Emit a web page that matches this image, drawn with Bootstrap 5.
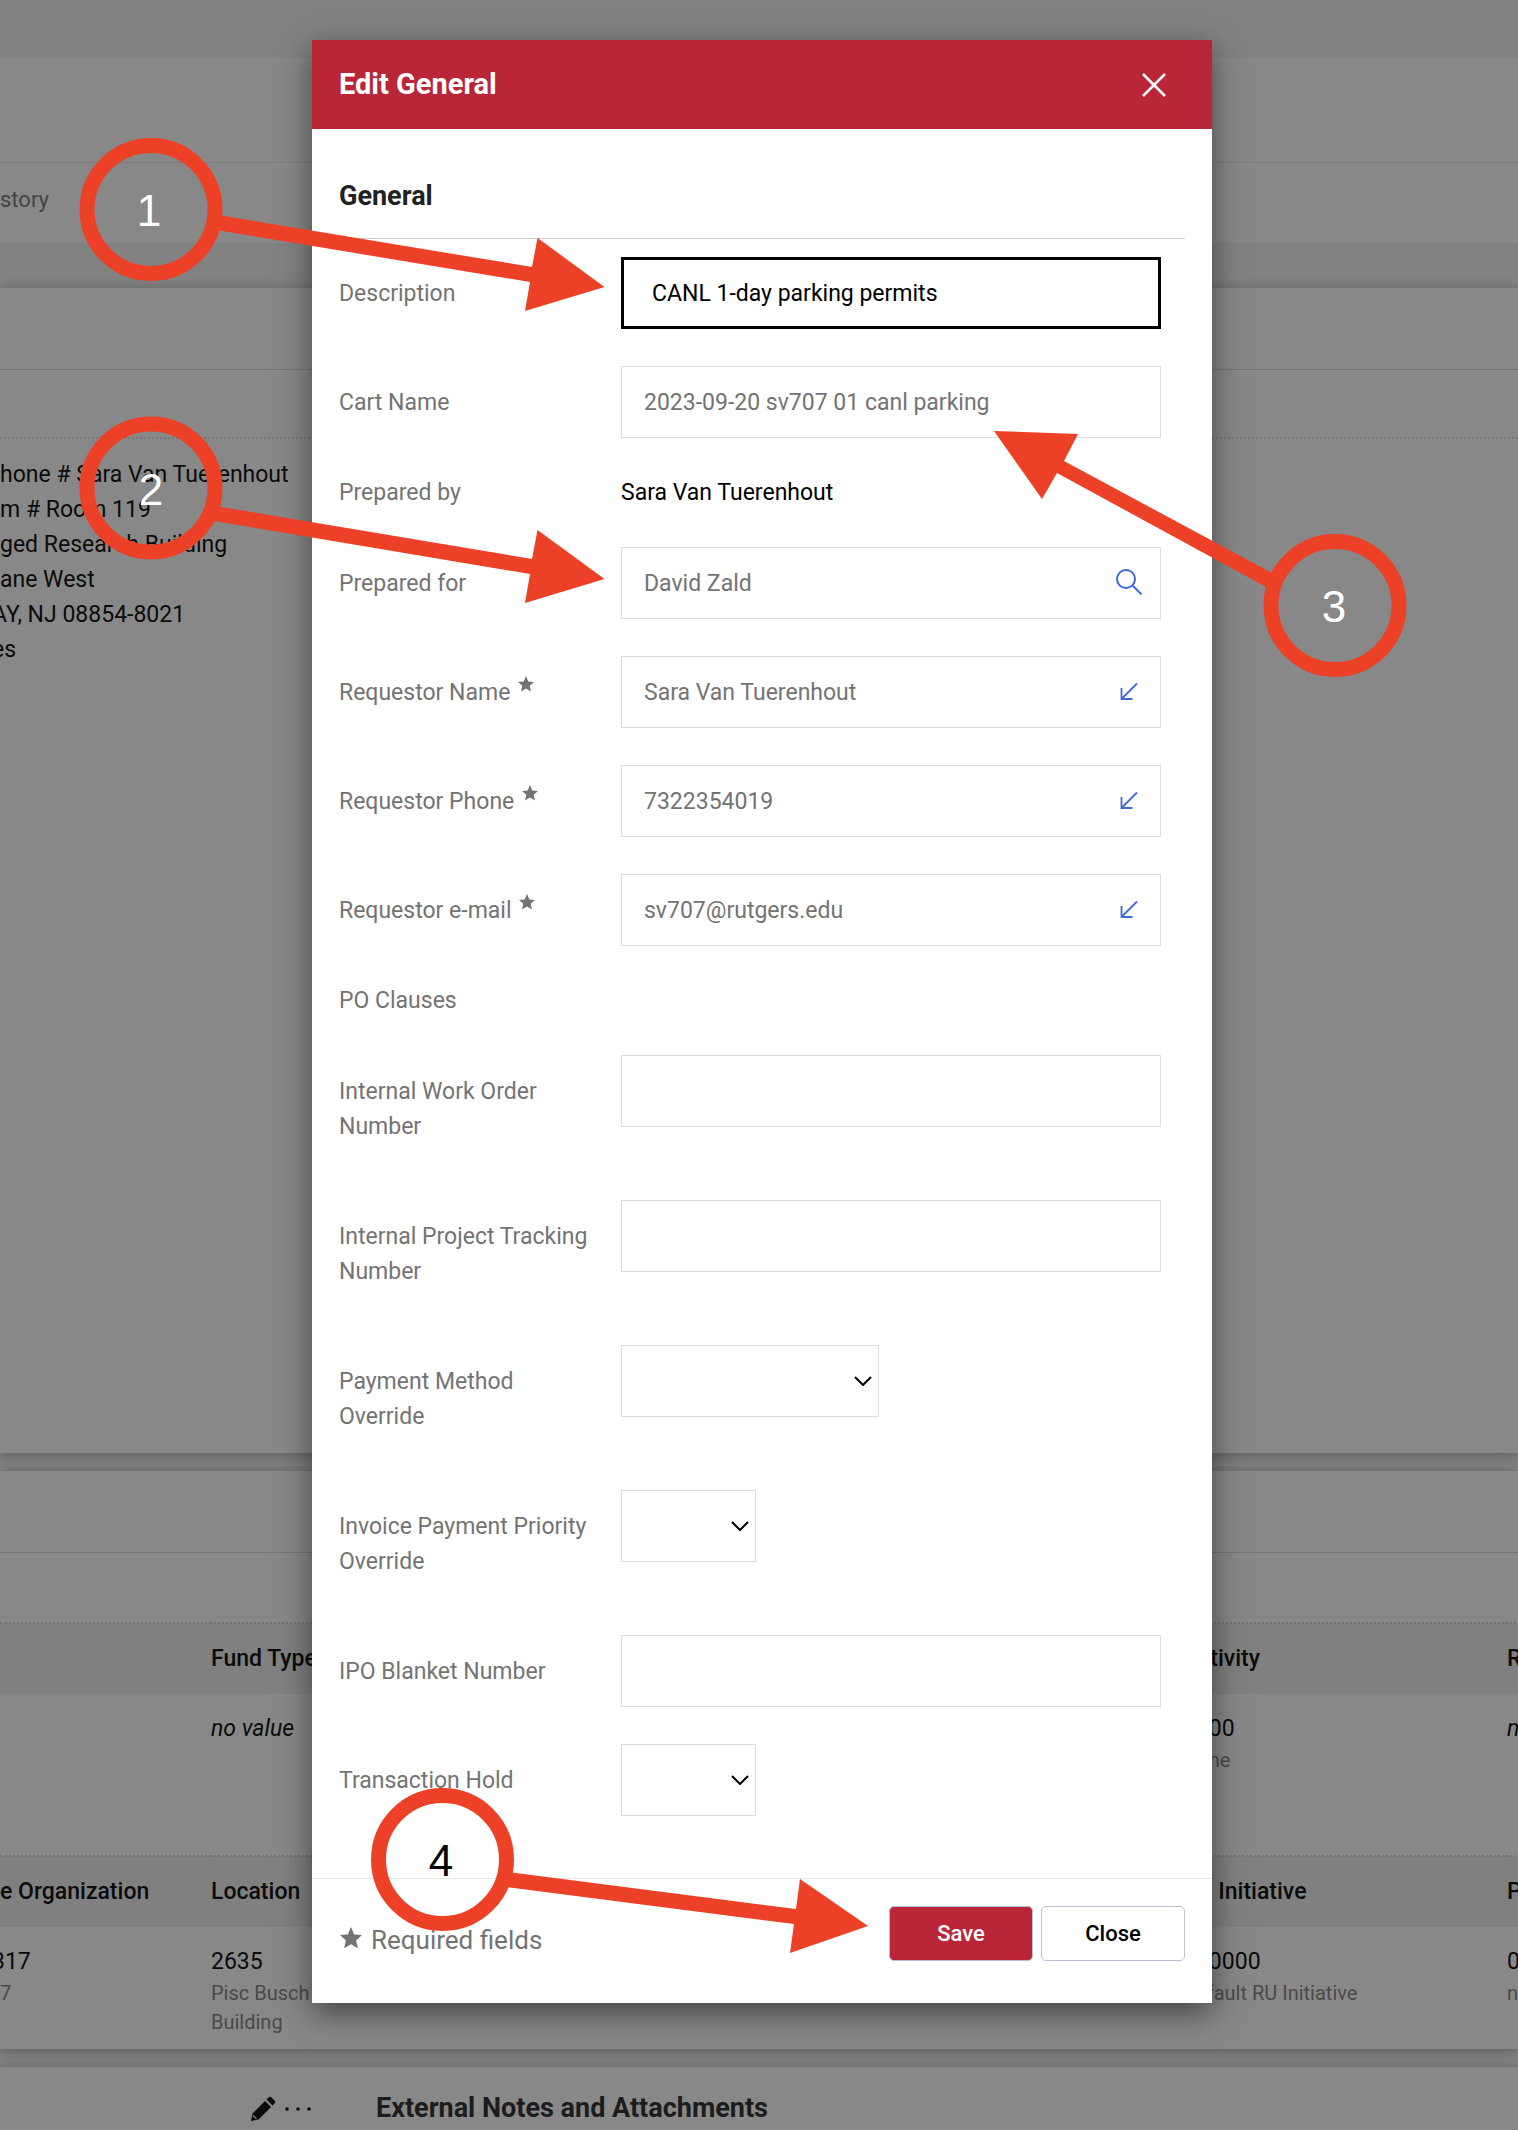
<!DOCTYPE html>
<html lang="en">
<head>
<meta charset="utf-8">
<meta name="viewport" content="width=device-width, initial-scale=1">
<title>Edit General</title>
<link href="https://cdn.jsdelivr.net/npm/bootstrap@5.3.0/dist/css/bootstrap.min.css" rel="stylesheet">
<style>
  body { font-family: Roboto, "Liberation Sans", sans-serif; font-size: 23px; line-height: 35px; color: #0b0b0b; background: #828282; overflow-x: hidden; }
  .page-under { min-height: 100vh; overflow: hidden; padding-top: 58px; }
  .panel { background: #888; }
  .panel-raised { box-shadow: 0 2px 12px rgba(0,0,0,.3); }
  .panel-gap { margin-top: 18px; }
  .line-solid { border-bottom: 1px solid #767676; }
  .line-dotted { border-bottom: 2px dotted #767676; }
  .top-band { height: 105px; border-bottom: 1px solid #7d7d7d; }
  .tab-band { height: 80px; color: #444; font-size: 22px; padding-bottom: 8px; }
  .address-panel { min-height: 1165px; margin-top: 45px; }
  .address-panel address { padding-top: 18px; }
  .cut-left { display: inline-block; margin-left: -8px; }
  .title-strip { height: 82px; }
  .sub-strip { height: 69px; }
  .codes { table-layout: fixed; width: 1620px; }
  .codes th { background: #808080; border-top: 2px dotted #727272; height: 71px; font-weight: 500; padding: 0 0 2px; vertical-align: middle; white-space: nowrap; }
  .codes td { vertical-align: top; padding: 17px 0 0; line-height: 35px; white-space: nowrap; }
  .codes .values-a td { height: 162px; }
  .codes .values-b td { height: 122px; }
  .codes small { display: block; color: #4a4a4a; font-size: 20px; line-height: 29px; }
  .c-first { width: 211px; }
  .c-code { width: 324px; }
  .notes-tools { padding-left: 250px; height: 35px; }
  .notes-title { font-size: 27px; font-weight: 700; line-height: 35px; color: #1c1c1c; }

  .dialog-layer { position: absolute; inset: 0 0 auto 0; padding: 40px 0 40px 6px; }
  .dialog-box { width: 900px; max-width: 100%; background: #fff; box-shadow: 0 10px 30px rgba(0,0,0,.5); }
  .dialog-head { background: #ba2638; height: 89px; padding: 0 44px 0 27px; color: #fff; }
  .dialog-head h1 { font-size: 29px; font-weight: 700; }
  .dialog-body { padding: 50px 27px 62px; }
  .dialog-body h2 { font-size: 27px; font-weight: 700; line-height: 35px; color: #1f2223; padding-bottom: 24px; border-bottom: 1px solid #ccc; margin-bottom: 18px; }
  .field-row { min-height: 109px; padding-right: 24px; }
  .field-label { width: 282px; flex: none; padding: 19px 20px 0 0; color: #737373; }
  .field-value { color: #000; }
  .field-static { min-height: 72px; }
  .field-static .field-label { padding-top: 0; }
  .field-tall { min-height: 145px; }
  .field-input { height: 72px; border: 1px solid #ddd; border-radius: 0; padding: 0 56px 0 22px; font-size: 23px; color: #737373; }
  .field-input.is-current { border: 3px solid #000; padding-left: 28px; color: #000; }
  .field-select { height: 72px; border: 1px solid #ddd; border-radius: 0; background-image: url("data:image/svg+xml,%3Csvg xmlns='http://www.w3.org/2000/svg' viewBox='0 0 18 10'%3E%3Cpath d='M1 1l8 8 8-8' fill='none' stroke='%23000' stroke-width='2'/%3E%3C/svg%3E"); background-size: 18px 10px; background-position: right 6px center; }
  .sel-wide { width: 258px; }
  .sel-narrow { width: 135px; }
  .field-icon { position: absolute; right: 18px; top: 21px; width: 28px; height: 28px; fill: none; stroke: #3f68dc; padding: 0; border: 0; background: none; line-height: 0; }
  .req-star { width: 16px; height: 16px; fill: #737373; vertical-align: 8px; margin-left: 2px; }
  .dialog-foot { border-top: 1px solid #e4e6e8; height: 125px; padding: 27px 27px 0; color: #737373; }
  .foot-note { padding-top: 17px; font-size: 26px; }
  .foot-btn { width: 144px; height: 55px; border-radius: 5px; border: 1px solid #b9bfd6; font-size: 22px; font-weight: 500; padding: 0; }
  .foot-save, .foot-save:hover { background: #ba2638; color: #fff; }
  .foot-close { background: #fff; color: #000; }
  .callouts { position: absolute; left: 0; top: 0; pointer-events: none; }
  .callouts text { font-family: "Liberation Sans", Arial, sans-serif; font-size: 44px; text-anchor: middle; fill: #fff; }
  .callouts .on-white { fill: #000; }
</style>
<script src="https://cdn.jsdelivr.net/npm/bootstrap@5.3.0/dist/js/bootstrap.bundle.min.js"></script>
</head>
<body class="position-relative">
<svg class="d-none">
  <symbol id="star" viewBox="0 0 22 22"><path d="M11 0l3.2 7.4 7.8.7-5.900 5.300 1.800 7.900L11 17.200l-6.900 4.100 1.800-7.900L0 8.100l7.800-.7z"/></symbol>
  <symbol id="pull" viewBox="0 0 28 28"><path d="M22 6.500L6.500 22M6.500 11v11h11" stroke-width="1.800"/></symbol>
</svg>

<main class="page-under d-flex flex-column">
  <div class="panel top-band"></div>
  <nav class="panel tab-band d-flex align-items-center"><span>story</span></nav>

  <section class="panel panel-raised address-panel">
    <div class="title-strip line-solid"></div>
    <div class="sub-strip line-dotted"></div>
    <address class="mb-0">
      hone # Sara Van Tuerenhout<br>
      m # Room 119<br>
      ged Research Building<br>
      ane West<br>
      <span class="cut-left">AY, NJ 08854-8021</span><br>
      <span class="cut-left">es</span>
    </address>
  </section>

  <section class="panel panel-raised panel-gap">
    <div class="title-strip line-solid"></div>
    <div class="sub-strip"></div>
    <table class="codes">
      <colgroup><col class="c-first"><col class="c-code"><col class="c-code"><col class="c-code"><col class="c-code"><col></colgroup>
      <tbody>
        <tr><th></th><th scope="col">Fund Type</th><th></th><th></th><th scope="col">Activity</th><th scope="col">R</th></tr>
        <tr class="values-a"><td></td><td><em>no value</em></td><td></td><td></td><td>0000<small>None</small></td><td><em>n</em></td></tr>
        <tr><th scope="col">e Organization</th><th scope="col">Location</th><th></th><th></th><th scope="col">RU Initiative</th><th scope="col">P</th></tr>
        <tr class="values-b"><td><span class="cut-left">317</span><small>7</small></td><td>2635<small>Pisc Busch<br>Building</small></td><td></td><td></td><td>000000<small>Default RU Initiative</small></td><td>0<small>na</small></td></tr>
      </tbody>
    </table>
  </section>

  <section class="panel panel-raised panel-gap flex-grow-1 d-flex align-items-start pt-4">
    <div class="notes-tools d-flex align-items-center gap-2">
      <svg width="26" height="26" viewBox="0 0 26 26" fill="#0b0b0b"><path d="M1 25l1.500-7.500L15 5l6 6L8.500 23.500zM16.500 3.500l2-2q1.500-1.500 3 0l3 3q1.500 1.500 0 3l-2 2z"/><path d="M3 19.500l3.500 3.500" stroke="#888" stroke-width="1.200"/></svg>
      <svg width="28" height="6" viewBox="0 0 28 6" fill="#0b0b0b"><circle cx="3" cy="3" r="1.800"/><circle cx="14" cy="3" r="1.800"/><circle cx="25" cy="3" r="1.800"/></svg>
    </div>
    <h2 class="notes-title mb-0 ms-5 ps-3">External Notes and Attachments</h2>
  </section>
</main>

<div class="dialog-layer">
  <form class="dialog-box mx-auto" role="dialog" aria-labelledby="dlg-title">
    <div class="dialog-head d-flex align-items-center justify-content-between">
      <h1 class="mb-0" id="dlg-title">Edit General</h1>
      <button type="button" class="btn p-0 border-0 lh-1" aria-label="Close dialog"><svg class="d-block" width="28" height="28" viewBox="0 0 28 28"><path d="M3 3l22 22M25 3L3 25" stroke="#fff" stroke-width="2.500"/></svg></button>
    </div>
    <div class="dialog-body">
      <h2>General</h2>
      <div class="field-row d-flex">
        <label class="field-label" for="f-desc">Description</label>
        <div class="flex-grow-1"><input id="f-desc" class="form-control field-input is-current" value="CANL 1-day parking permits"></div>
      </div>
      <div class="field-row d-flex">
        <label class="field-label" for="f-cart">Cart Name</label>
        <div class="flex-grow-1"><input id="f-cart" class="form-control field-input" value="2023-09-20 sv707 01 canl parking"></div>
      </div>
      <div class="field-row field-static d-flex">
        <div class="field-label">Prepared by</div><div class="field-value">Sara Van Tuerenhout</div>
      </div>
      <div class="field-row d-flex">
        <label class="field-label" for="f-for">Prepared for</label>
        <div class="flex-grow-1 position-relative"><input id="f-for" class="form-control field-input" value="David Zald"><button type="button" class="field-icon" aria-label="Search"><svg width="28" height="28" viewBox="0 0 28 28"><circle cx="11" cy="11" r="9" stroke-width="2"/><path d="M17.500 17.500l9 9" stroke-width="2"/></svg></button></div>
      </div>
      <div class="field-row d-flex">
        <label class="field-label" for="f-name">Requestor Name <svg class="req-star"><use href="#star"/></svg></label>
        <div class="flex-grow-1 position-relative"><input id="f-name" class="form-control field-input" value="Sara Van Tuerenhout"><button type="button" class="field-icon" aria-label="Copy name"><svg width="28" height="28"><use href="#pull"/></svg></button></div>
      </div>
      <div class="field-row d-flex">
        <label class="field-label" for="f-phone">Requestor Phone <svg class="req-star"><use href="#star"/></svg></label>
        <div class="flex-grow-1 position-relative"><input id="f-phone" class="form-control field-input" value="7322354019"><button type="button" class="field-icon" aria-label="Copy phone"><svg width="28" height="28"><use href="#pull"/></svg></button></div>
      </div>
      <div class="field-row d-flex">
        <label class="field-label" for="f-mail">Requestor e-mail <svg class="req-star"><use href="#star"/></svg></label>
        <div class="flex-grow-1 position-relative"><input id="f-mail" class="form-control field-input" value="sv707@rutgers.edu"><button type="button" class="field-icon" aria-label="Copy e-mail"><svg width="28" height="28"><use href="#pull"/></svg></button></div>
      </div>
      <div class="field-row field-static d-flex"><div class="field-label">PO Clauses</div></div>
      <div class="field-row field-tall d-flex">
        <label class="field-label" for="f-work">Internal Work Order Number</label>
        <div class="flex-grow-1"><input id="f-work" class="form-control field-input"></div>
      </div>
      <div class="field-row field-tall d-flex">
        <label class="field-label" for="f-track">Internal Project Tracking Number</label>
        <div class="flex-grow-1"><input id="f-track" class="form-control field-input"></div>
      </div>
      <div class="field-row field-tall d-flex">
        <label class="field-label" for="f-pay">Payment Method Override</label>
        <div><select id="f-pay" class="form-select field-select sel-wide"><option></option></select></div>
      </div>
      <div class="field-row field-tall d-flex">
        <label class="field-label" for="f-inv">Invoice Payment Priority Override</label>
        <div><select id="f-inv" class="form-select field-select sel-narrow"><option></option></select></div>
      </div>
      <div class="field-row d-flex">
        <label class="field-label" for="f-ipo">IPO Blanket Number</label>
        <div class="flex-grow-1"><input id="f-ipo" class="form-control field-input"></div>
      </div>
      <div class="d-flex">
        <label class="field-label" for="f-hold">Transaction Hold</label>
        <div><select id="f-hold" class="form-select field-select sel-narrow"><option></option></select></div>
      </div>
    </div>
    <div class="dialog-foot d-flex justify-content-between align-items-start">
      <div class="foot-note d-flex gap-2"><svg class="mt-1" width="24" height="22" fill="#737373"><use href="#star"/></svg><span>Required fields</span></div>
      <div class="d-flex gap-2">
        <button type="button" class="btn foot-btn foot-save">Save</button>
        <button type="button" class="btn foot-btn foot-close">Close</button>
      </div>
    </div>
  </form>
</div>

<svg class="callouts" width="1518" height="2130" viewBox="0 0 1518 2130" fill="#ec4126">
  <g fill="none" stroke="#ec4126" stroke-width="15">
    <circle cx="151" cy="209.500" r="64"/><circle cx="151" cy="488" r="64"/><circle cx="1335" cy="605.500" r="64"/><circle cx="442.500" cy="1859.500" r="64"/>
  </g>
  <path d="M218 215L532 267 537.500 238 604.500 287 525 311 530 282 216 230z"/>
  <path d="M218 506.500L532 559 537.500 530 604.500 579 525 603 530 574 214 521z"/>
  <path d="M1274 574L1064 461 1078 434 994 431 1042 499 1057 473 1268 588z"/>
  <path d="M508 1872L796 1909 800 1879 868 1926 790 1953 794 1924 506 1887z"/>
  <text x="149" y="226">1</text><text x="151" y="505">2</text><text x="1334" y="622">3</text><text class="on-white" x="441" y="1876">4</text>
</svg>
</body>
</html>
